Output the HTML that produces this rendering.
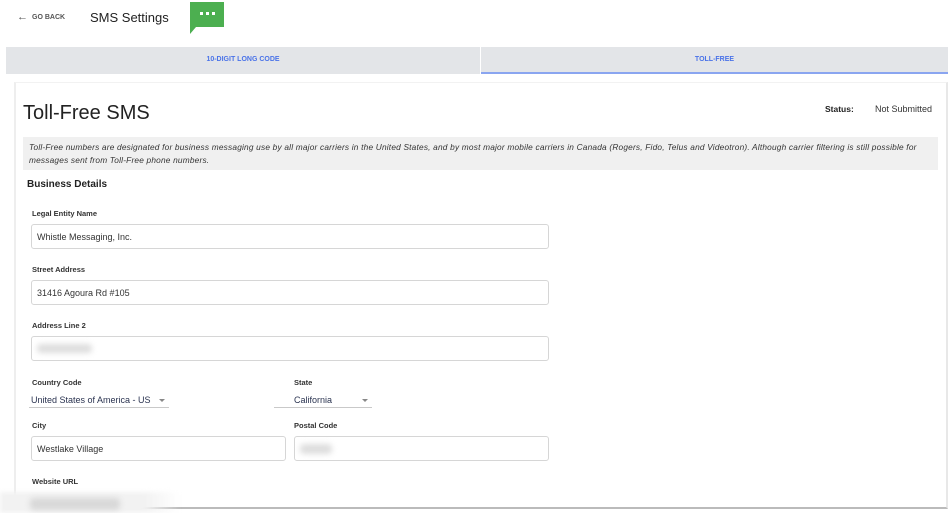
<!DOCTYPE html>
<html><head><meta charset="utf-8"><style>
*{box-sizing:border-box;margin:0;padding:0}
body{width:950px;height:513px;overflow:hidden;background:#fff;font-family:"Liberation Sans",sans-serif;color:#222;position:relative}
.abs{position:absolute}
.lbl{position:absolute;font-size:7.5px;font-weight:bold;color:#333}
.inp{position:absolute;border:1px solid #d6d6d6;border-radius:3px;height:25px;font-size:9px;color:#333;padding:7px 0 0 5px;background:#fff}
.blur{position:absolute;background:#ddd;filter:blur(3px);border-radius:4px}
.sel{position:absolute;border-bottom:1px solid #c9c9c9;font-size:9px;color:#2a3350;height:16px;padding-top:3px}
.sel .ar{position:absolute;right:4px;top:7px;border-left:3px solid transparent;border-right:3px solid transparent;border-top:3px solid #888}
</style></head><body>
<div class="abs" style="left:17px;top:11px;font-size:11px;color:#555">&#8592;</div>
<div class="abs" style="left:32px;top:14px;font-size:7px;font-weight:bold;color:#555">GO BACK</div>
<div class="abs" style="left:90px;top:10px;font-size:13px;color:#222">SMS Settings</div>
<svg class="abs" style="left:189px;top:2px" width="38" height="32" viewBox="0 0 38 32"><path d="M1 0H35V25H7L1 32Z" fill="#4caf50"/><rect x="11" y="10" width="3" height="3" fill="#fff"/><rect x="17" y="10" width="3" height="3" fill="#fff"/><rect x="23" y="10" width="3" height="3" fill="#fff"/></svg>
<div class="abs" style="left:6px;top:47px;width:942px;height:27px;background:#e3e5e8"></div>
<div class="abs" style="left:480px;top:47px;width:1px;height:27px;background:#fff"></div>
<div class="abs" style="left:481px;top:72px;width:467px;height:2px;background:#8aa5f0"></div>
<div class="abs" style="left:6px;top:56px;width:474px;text-align:center;font-size:7px;font-weight:bold;color:#4a73e8">10-DIGIT LONG CODE</div>
<div class="abs" style="left:481px;top:56px;width:467px;text-align:center;font-size:7px;font-weight:bold;color:#4a73e8">TOLL-FREE</div>
<div class="abs" style="left:14px;top:82px;width:934px;height:427px;background:#fff;border-left:2px solid #eee;border-right:2px solid #e8e8e8;border-top:1px solid #f2f2f2;border-bottom:2px solid #bbb"></div>
<div class="abs" style="left:23px;top:102px;font-size:20px;color:#222">Toll-Free SMS</div>
<div class="abs" style="left:825px;top:104px;font-size:8.5px;font-weight:bold">Status:</div>
<div class="abs" style="left:875px;top:104px;font-size:9px;color:#333">Not Submitted</div>
<div class="abs" style="left:23px;top:137px;width:915px;height:33px;background:#f0f0f0;padding:4px 6px;font-size:8.3px;letter-spacing:0.2px;font-style:italic;line-height:13px;color:#333">Toll-Free numbers are designated for business messaging use by all major carriers in the United States, and by most major mobile carriers in Canada (Rogers, Fido, Telus and Videotron). Although carrier filtering is still possible for messages sent from Toll-Free phone numbers.</div>
<div class="abs" style="left:27px;top:179px;font-size:10px;font-weight:bold">Business Details</div>
<div class="lbl" style="left:32px;top:209px">Legal Entity Name</div>
<div class="inp" style="left:31px;top:224px;width:518px">Whistle Messaging, Inc.</div>
<div class="lbl" style="left:32px;top:265px">Street Address</div>
<div class="inp" style="left:31px;top:280px;width:518px">31416 Agoura Rd #105</div>
<div class="lbl" style="left:32px;top:321px">Address Line 2</div>
<div class="inp" style="left:31px;top:336px;width:518px"></div>
<div class="blur" style="left:37px;top:344px;width:55px;height:9px"></div>
<div class="lbl" style="left:32px;top:378px">Country Code</div>
<div class="sel" style="left:29px;top:392px;width:140px;padding-left:2px">United States of America - US<span class="ar"></span></div>
<div class="lbl" style="left:294px;top:378px">State</div>
<div class="sel" style="left:274px;top:392px;width:98px;padding-left:20px">California<span class="ar"></span></div>
<div class="lbl" style="left:32px;top:421px">City</div>
<div class="inp" style="left:31px;top:436px;width:255px">Westlake Village</div>
<div class="lbl" style="left:294px;top:421px">Postal Code</div>
<div class="inp" style="left:294px;top:436px;width:255px"></div>
<div class="blur" style="left:300px;top:444px;width:32px;height:10px"></div>
<div class="lbl" style="left:32px;top:477px">Website URL</div>
<div class="abs" style="left:0;top:492px;width:180px;height:21px;background:linear-gradient(90deg,#f2f2f2 80%,rgba(255,255,255,0));filter:blur(2px)"></div>
<div class="blur" style="left:30px;top:498px;width:90px;height:12px;background:#d8d8d8"></div>
</body></html>
